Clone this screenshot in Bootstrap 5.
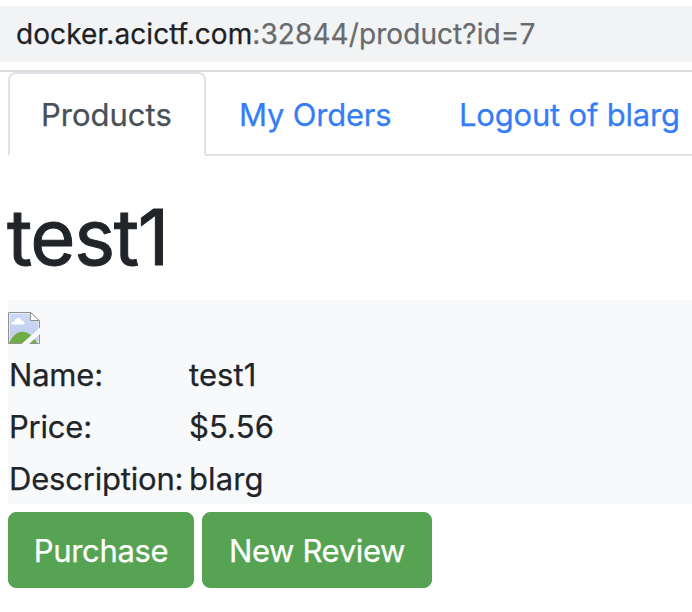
<!DOCTYPE html>
<html lang="en">
<head>
<meta charset="utf-8">
<meta name="viewport" content="width=device-width, initial-scale=1">
<title>Product</title>
<link href="https://cdn.jsdelivr.net/npm/bootstrap@5.3.0/dist/css/bootstrap.min.css" rel="stylesheet">
<style>
body{font-family:Inter,"Liberation Sans",sans-serif;font-size:31px;line-height:48px;color:#212529;background:#fff;letter-spacing:-.3px;overflow:hidden;white-space:nowrap}
.address-bar{padding-top:6px;height:72px;border-bottom:2px solid #dadce0}
.address{height:56px;background:#f1f3f4;padding-left:16px;font-size:28px;color:#202124;letter-spacing:.08px;-webkit-text-stroke:.25px}
.address .rest{color:#696a6c}
.page{padding-left:8px;-webkit-text-stroke:.25px}
.nav-tabs{--bs-nav-tabs-border-width:2px;--bs-nav-tabs-border-color:#dee2e6;--bs-nav-tabs-border-radius:8px;height:84px}
.nav-tabs .nav-link{height:84px;color:#347df7;padding:17px 0 17px 31px;letter-spacing:-.2px}
.nav-tabs .nav-link.active{color:#495057;width:198px;letter-spacing:0}
.item-2{width:220px}
h1.title{font-size:77.5px;line-height:96px;font-weight:400;letter-spacing:-1.3px;margin:33px 0 15px -1px;-webkit-text-stroke:1px}
.details{background:#f8f9fb;height:204px;padding-top:12px}
.details svg{width:32px;height:32px}
.details table{margin-top:5px}
.details td{padding:2px 0 2px 1px;height:52px}
.details td:first-child{width:180px;letter-spacing:-.2px}
.details td:last-child{letter-spacing:.1px}
.btn-buy{--bs-btn-bg:#56a453;--bs-btn-color:#fff;--bs-btn-border-color:#56a453;--bs-btn-font-size:31px;--bs-btn-line-height:48px;--bs-btn-border-radius:8px;height:76px;padding:14px 0 12px;letter-spacing:-.35px}
.buy{width:186px}
.review{width:230px}
</style>
</head>
<body>
<header class="address-bar"><div class="address d-flex align-items-center"><span>docker.acictf.com</span><span class="rest">:32844/product?id=7</span></div></header>
<main class="page">
<ul class="nav nav-tabs flex-nowrap">
<li class="nav-item flex-shrink-0"><a class="nav-link active" href="#">Products</a></li>
<li class="nav-item flex-shrink-0 item-2"><a class="nav-link" href="#">My Orders</a></li>
<li class="nav-item flex-shrink-0"><a class="nav-link" href="#">Logout of blarg</a></li>
</ul>
<h1 class="title">test1</h1>
<section class="details">
<svg class="d-block" viewBox="0 0 32 32" aria-label="Missing image"><defs><linearGradient id="sky" x2="0" y2="1"><stop stop-color="#cbdaf6"/><stop offset="1" stop-color="#c0ccea"/></linearGradient></defs>
<path d="M.5.5H22.5L31.5 9V31.5H.5Z" fill="#fff" stroke="#919191"/>
<path d="M1.500 1.500H22V9H30.500V30.500H1.500Z" fill="url(#sky)"/>
<path d="M5 12.500C2.500 12.500 3 9.500 6.500 9.500C7 5 13 5 13.500 8.500C17 8.500 17 12.500 15 12.500Z" fill="#fff"/>
<path d="M1 31C8 16.500 20 15.500 29 31Z" fill="#70ad47"/>
<path d="M22.500.5V8.500H31.500Z" fill="#fff" stroke="#919191"/>
<path d="M13.500 32L32 15.500V22L21 32Z" fill="#f8f9fb"/></svg>
<table><tbody>
<tr><td>Name:</td><td>test1</td></tr>
<tr><td>Price:</td><td>$5.56</td></tr>
<tr><td>Description:</td><td>blarg</td></tr>
</tbody></table>
</section>
<div class="d-flex gap-2 mt-2"><button type="button" class="btn btn-buy buy">Purchase</button><button type="button" class="btn btn-buy review">New Review</button></div>
</main>
<script src="https://cdn.jsdelivr.net/npm/bootstrap@5.3.0/dist/js/bootstrap.bundle.min.js"></script>
</body>
</html>
